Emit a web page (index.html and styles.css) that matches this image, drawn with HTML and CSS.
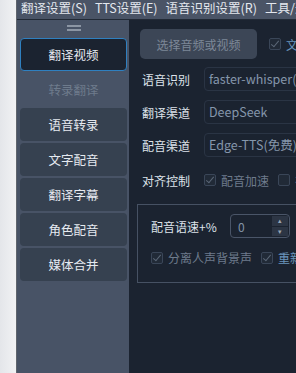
FILE: index.html
```html
<!DOCTYPE html>
<html lang="zh">
<head>
  <meta charset="UTF-8" />
  <title>视频翻译</title>
  <link rel="stylesheet" href="styles.css">
</head>
<body>
  <div class="desk"></div>

  <div class="app">
    <div class="menubar">
      <span>翻译设置(S)</span>
      <span>TTS设置(E)</span>
      <span>语音识别设置(R)</span>
      <span>工具/选项</span>
    </div>

    <div class="body">
      <div class="sidebar">
        <div class="handle"><i></i><i></i></div>
        <div class="nav active">翻译视频</div>
        <div class="nav disabled">转录翻译</div>
        <div class="nav">语音转录</div>
        <div class="nav">文字配音</div>
        <div class="nav">翻译字幕</div>
        <div class="nav">角色配音</div>
        <div class="nav">媒体合并</div>
      </div>

      <div class="main">
        <div class="top-row">
          <div class="pick-btn">选择音频或视频</div>
          <label class="check blue"><span class="box on"></span>文件夹</label>
        </div>

        <div class="field">
          <span class="label">语音识别</span>
          <div class="input">faster-whisper(本地)</div>
        </div>
        <div class="field">
          <span class="label">翻译渠道</span>
          <div class="input">DeepSeek</div>
        </div>
        <div class="field">
          <span class="label">配音渠道</span>
          <div class="input">Edge-TTS(免费)</div>
        </div>

        <div class="field align">
          <span class="label">对齐控制</span>
          <label class="check"><span class="box on"></span>配音加速</label>
          <label class="check"><span class="box"></span>视频慢速</label>
        </div>

        <div class="group">
          <div class="speed-row">
            <span class="label">配音语速+%</span>
            <div class="spin">
              <span class="spin-val">0</span>
              <div class="spin-btns">
                <span>&#9652;</span>
                <span>&#9662;</span>
              </div>
            </div>
          </div>
          <div class="opts-row">
            <label class="check"><span class="box on"></span>分离人声背景声</label>
            <label class="check blue"><span class="box on"></span>重新识别</label>
          </div>
        </div>
      </div>
    </div>
  </div>
</body>
</html>
```

FILE: styles.css
```css
:root {
  --desk: #eceef1;
  --menubar: #4a5466;
  --sidebar: #485366;
  --nav-bg: #364150;
  --main-bg: #1b2330;
  --accent: #2f80c0;
  --text: #dde2ea;
  --dim: #6e7b8c;
  --line: #465163;
}

* {
  box-sizing: border-box;
}

body {
  margin: 0;
  width: 296px;
  height: 373px;
  overflow: hidden;
  display: flex;
  font-family: "Noto Sans CJK SC", "Noto Sans", sans-serif;
  font-size: 12px;
  color: var(--text);
}

.desk {
  width: 17px;
  flex-shrink: 0;
  background: linear-gradient(to right, #e4e6ea, #f1f2f4);
  border-right: 1px solid #60656d;
}

.app {
  flex: 1;
  min-width: 0;
  display: flex;
  flex-direction: column;
}

.menubar {
  height: 20px;
  flex-shrink: 0;
  background: var(--menubar);
  border-bottom: 1px solid #222a36;
  display: flex;
  gap: 8px;
  padding-left: 4px;
  font-size: 12.5px;
  line-height: 16px;
  white-space: nowrap;
  overflow: hidden;
  color: #e3e7ee;
}

.body {
  flex: 1;
  display: flex;
}

/* left navigation */
.sidebar {
  width: 112px;
  flex-shrink: 0;
  background: var(--sidebar);
  padding: 0 2px 0 3px;
  display: flex;
  flex-direction: column;
  gap: 2px;
}

.handle {
  height: 16px;
  display: flex;
  flex-direction: column;
  align-items: center;
  justify-content: center;
  gap: 2px;
}

.handle i {
  display: block;
  width: 14px;
  height: 2px;
  background: #8c96a4;
}

.nav {
  height: 33px;
  border-radius: 4px;
  background: var(--nav-bg);
  display: flex;
  align-items: center;
  justify-content: center;
  color: #e6eaf0;
  font-size: 12.5px;
}

.nav.active {
  background: var(--main-bg);
  border: 1px solid var(--accent);
}

.nav.disabled {
  background: transparent;
  color: var(--dim);
}

/* right panel */
.main {
  flex: 1;
  min-width: 0;
  background: var(--main-bg);
  padding: 9px 0 0 11px;
  overflow: hidden;
  white-space: nowrap;
}

.top-row {
  display: flex;
  align-items: center;
  height: 30px;
  margin-bottom: 8px;
}

.pick-btn {
  width: 117px;
  height: 30px;
  flex-shrink: 0;
  border-radius: 5px;
  background: #3c4656;
  color: #7d8898;
  display: flex;
  align-items: center;
  justify-content: center;
}

.top-row .check {
  margin-left: 12px;
}

.field {
  display: flex;
  align-items: center;
  height: 24px;
  margin-bottom: 9px;
}

.label {
  width: 64px;
  flex-shrink: 0;
  padding-left: 2px;
  color: var(--text);
}

.input {
  width: 140px;
  flex-shrink: 0;
  height: 24px;
  border: 1px solid #2a3444;
  border-radius: 4px;
  padding-left: 4px;
  line-height: 21px;
  color: #8596ab;
  font-size: 12.5px;
}

.field.align {
  margin-top: 11px;
  margin-bottom: 0;
}

.check {
  display: flex;
  align-items: center;
  gap: 5px;
  color: var(--dim);
  margin-right: 9px;
}

.check.blue {
  color: #6a94bb;
}

.box {
  width: 12px;
  height: 12px;
  flex-shrink: 0;
  border: 1px solid #3a4658;
  border-radius: 2px;
  background: #212a37;
  position: relative;
}

.box.on::after {
  content: "";
  position: absolute;
  left: 3px;
  top: 0;
  width: 3px;
  height: 7px;
  border: solid #5b6777;
  border-width: 0 1.5px 1.5px 0;
  transform: rotate(40deg);
}

.group {
  margin: 12px 0 0 -3px;
  width: 180px;
  height: 79px;
  border: 1px solid var(--line);
  border-right: none;
  padding: 9px 0 0 13px;
}

.speed-row {
  display: flex;
  align-items: center;
  height: 24px;
}

.speed-row .label {
  width: 79px;
  padding-left: 0;
}

.spin {
  width: 60px;
  height: 24px;
  border: 1px solid #4a5568;
  border-radius: 4px;
  display: flex;
  align-items: center;
  justify-content: space-between;
  padding: 1px 1px 1px 7px;
  color: #8393a6;
}

.spin-btns {
  width: 16px;
  height: 20px;
  display: flex;
  flex-direction: column;
  gap: 1px;
}

.spin-btns span {
  flex: 1;
  background: #2c3544;
  color: #9aa5b3;
  font-size: 7px;
  line-height: 9px;
  text-align: center;
}

.opts-row {
  display: flex;
  align-items: center;
  margin-top: 11px;
}
```
